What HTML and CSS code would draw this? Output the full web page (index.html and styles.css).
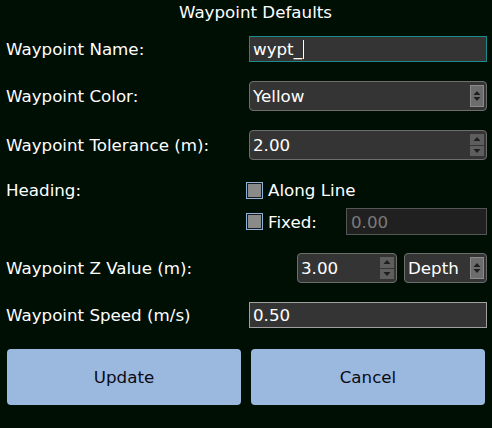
FILE: index.html
```html
<!DOCTYPE html>
<html>
<head>
<meta charset="utf-8">
<link rel="stylesheet" href="styles.css">
</head>
<body>
<div class="dialog">
  <div class="title">Waypoint Defaults</div>

  <div class="row row-name">
    <div class="label">Waypoint Name:</div>
    <div class="field field-focus"><span class="val">wypt_</span><span class="caret"></span></div>
  </div>

  <div class="row row-30">
    <div class="label">Waypoint Color:</div>
    <div class="combo combo-wide">
      <span class="val">Yellow</span>
      <span class="combo-btn">
        <svg width="8" height="12" viewBox="0 0 8 12"><path d="M4 1 L7.5 5 H0.5 Z M4 11 L7.5 7 H0.5 Z" fill="#1e1e1e"/></svg>
      </span>
    </div>
  </div>

  <div class="row row-30">
    <div class="label">Waypoint Tolerance (m):</div>
    <div class="combo combo-wide">
      <span class="val">2.00</span>
      <span class="spin-btns">
        <span class="spin-half"><svg width="8" height="6" viewBox="0 0 8 6"><path d="M4 1 L7.5 5 H0.5 Z" fill="#1e1e1e"/></svg></span>
        <span class="spin-half"><svg width="8" height="6" viewBox="0 0 8 6"><path d="M4 5 L7.5 1 H0.5 Z" fill="#1e1e1e"/></svg></span>
      </span>
    </div>
  </div>

  <div class="heading">
    <div class="row row-24">
      <div class="label">Heading:</div>
      <div class="check-wrap"><span class="check"></span><span class="check-text">Along Line</span></div>
    </div>
    <div class="row row-27">
      <div class="label"></div>
      <div class="check-wrap">
        <span class="check"></span><span class="check-text fixed-text">Fixed:</span>
        <div class="field field-disabled"><span class="val">0.00</span></div>
      </div>
    </div>
  </div>

  <div class="row row-30 row-z">
    <div class="label">Waypoint Z Value (m):</div>
    <div class="z-controls">
      <div class="combo combo-z">
        <span class="val">3.00</span>
        <span class="spin-btns">
          <span class="spin-half"><svg width="8" height="6" viewBox="0 0 8 6"><path d="M4 1 L7.5 5 H0.5 Z" fill="#1e1e1e"/></svg></span>
          <span class="spin-half"><svg width="8" height="6" viewBox="0 0 8 6"><path d="M4 5 L7.5 1 H0.5 Z" fill="#1e1e1e"/></svg></span>
        </span>
      </div>
      <div class="combo combo-depth">
        <span class="val">Depth</span>
        <span class="combo-btn">
          <svg width="8" height="12" viewBox="0 0 8 12"><path d="M4 1 L7.5 5 H0.5 Z M4 11 L7.5 7 H0.5 Z" fill="#1e1e1e"/></svg>
        </span>
      </div>
    </div>
  </div>

  <div class="row row-speed">
    <div class="label">Waypoint Speed (m/s)</div>
    <div class="field field-speed"><span class="val">0.50</span></div>
  </div>

  <div class="buttons">
    <div class="btn">Update</div>
    <div class="btn">Cancel</div>
  </div>
</div>
</body>
</html>
```

FILE: styles.css
```css
html, body {
  margin: 0;
  padding: 0;
  background: #000f04;
}
body {
  width: 492px;
  height: 428px;
  overflow: hidden;
  font-family: "DejaVu Sans", "Liberation Sans", sans-serif;
  font-size: 16.7px;
  color: #ffffff;
}
.dialog {
  display: flex;
  flex-direction: column;
  padding: 0 5px 0 6px;
}
.title {
  height: 24px;
  line-height: 24px;
  text-align: center;
  padding-left: 18px;
}
.row {
  display: flex;
  align-items: center;
}
.label {
  width: 243px;
  flex: none;
}
.row-name { margin-top: 12px; height: 26px; }
.row-30 { margin-top: 19px; height: 30px; }
.row-z { margin-top: 18px; }
.row-24 { height: 24px; }
.row-27 { height: 27px; margin-top: 6px; }
.row-speed { margin-top: 19px; height: 26px; }
.heading { margin-top: 18px; }

.field {
  box-sizing: border-box;
  height: 26px;
  width: 238px;
  background: #343434;
  border: 1px solid #6a6a6a;
  display: flex;
  align-items: center;
  padding-left: 3px;
}
.field-focus { border-color: #1f8a8c; }
.field-speed { border-color: #a0a0a0; }
.caret {
  display: inline-block;
  width: 1px;
  height: 19px;
  background: #ffffff;
  margin-left: 1px;
}
.combo {
  box-sizing: border-box;
  height: 30px;
  background: #343434;
  border: 1px solid #6e6e6e;
  border-radius: 4px;
  display: flex;
  align-items: center;
  justify-content: space-between;
  padding-left: 3px;
  padding-right: 2px;
}
.combo-wide { width: 238px; }
.combo-btn {
  width: 14px;
  height: 22px;
  background: #6c6c6c;
  border: 1px solid #8a8a8a;
  box-sizing: border-box;
  display: flex;
  align-items: center;
  justify-content: center;
}
.spin-btns {
  width: 14px;
  height: 22px;
  display: flex;
  flex-direction: column;
  gap: 1px;
}
.spin-half {
  flex: 1;
  background: #5e5e5e;
  display: flex;
  align-items: center;
  justify-content: center;
}
.check-wrap {
  display: flex;
  align-items: center;
  margin-left: -3px;
}
.check {
  box-sizing: border-box;
  width: 17px;
  height: 17px;
  border: 1px solid #8fb2d8;
  background: #8a8a88;
  box-shadow: inset 0 0 0 1px #1a1a1a;
}
.check-text { margin-left: 5px; }
.fixed-text { width: 78px; }
.field-disabled {
  width: 141px;
  height: 27px;
  background: #202020;
  border-color: #555555;
  color: #7a7a7a;
  padding-left: 4px;
}
.z-controls {
  display: flex;
  margin-left: 48px;
  gap: 7px;
}
.combo-z { width: 100px; }
.combo-depth { width: 83px; }
.buttons {
  display: flex;
  gap: 10px;
  margin-top: 21px;
  padding-left: 1px;
  padding-right: 2px;
}
.btn {
  flex: 1;
  height: 56px;
  background: #9bb9df;
  border-radius: 4px;
  color: #0a0a14;
  display: flex;
  align-items: center;
  justify-content: center;
}
```
